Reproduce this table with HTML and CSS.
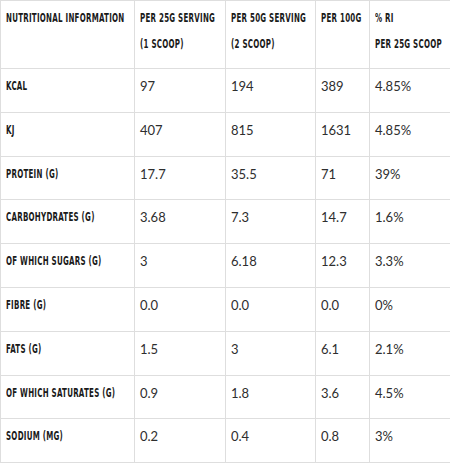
FILE: index.html
```html
<!DOCTYPE html>
<html>
<head>
<meta charset="utf-8">
<link rel="stylesheet" href="styles.css">
</head>
<body>
<table class="nutri">
  <colgroup>
    <col class="c1"><col class="c2"><col class="c3"><col class="c4"><col class="c5">
  </colgroup>
  <tr class="head">
    <th><span class="cn">Nutritional Information</span></th>
    <th><span class="cn">Per 25g Serving</span><br><span class="cn">(1 Scoop)</span></th>
    <th><span class="cn">Per 50g Serving</span><br><span class="cn">(2 Scoop)</span></th>
    <th><span class="cn">Per 100g</span></th>
    <th><span class="cn">% RI</span><br><span class="cn">Per 25g Scoop</span></th>
  </tr>
  <tr><th><span class="cn">Kcal</span></th><td>97</td><td>194</td><td>389</td><td>4.85%</td></tr>
  <tr><th><span class="cn">KJ</span></th><td>407</td><td>815</td><td>1631</td><td>4.85%</td></tr>
  <tr><th><span class="cn">Protein (g)</span></th><td>17.7</td><td>35.5</td><td>71</td><td>39%</td></tr>
  <tr><th><span class="cn">Carbohydrates (g)</span></th><td>3.68</td><td>7.3</td><td>14.7</td><td>1.6%</td></tr>
  <tr><th><span class="cn">Of which sugars (g)</span></th><td>3</td><td>6.18</td><td>12.3</td><td>3.3%</td></tr>
  <tr><th><span class="cn">Fibre (g)</span></th><td>0.0</td><td>0.0</td><td>0.0</td><td>0%</td></tr>
  <tr><th><span class="cn">Fats (g)</span></th><td>1.5</td><td>3</td><td>6.1</td><td>2.1%</td></tr>
  <tr><th><span class="cn">Of which saturates (g)</span></th><td>0.9</td><td>1.8</td><td>3.6</td><td>4.5%</td></tr>
  <tr><th><span class="cn">Sodium (mg)</span></th><td>0.2</td><td>0.4</td><td>0.8</td><td>3%</td></tr>
</table>
</body>
</html>
```
FILE: styles.css
```css
html, body {
  margin: 0;
  padding: 0;
  background: #fff;
  overflow: hidden;
}
.nutri {
  border-collapse: collapse;
  table-layout: fixed;
  width: 450px;
}
.c1 { width: 134px; }
.c2 { width: 91px; }
.c3 { width: 90px; }
.c4 { width: 54px; }
.c5 { width: 81px; }
.nutri th, .nutri td {
  border: 1px solid #dedede;
  vertical-align: top;
  text-align: left;
  padding: 4px 5px 0 5px;
  line-height: 26px;
  box-sizing: border-box;
  overflow: hidden;
}
.nutri tr { height: 43.8px; }
.nutri tr.head { height: 68px; }
.nutri th {
  font-family: "DejaVu Sans Condensed", "DejaVu Sans", sans-serif;
  font-weight: bold;
  font-size: 12.5px;
  text-transform: uppercase;
  color: #1a1a1a;
  letter-spacing: 0.4px;
  white-space: nowrap;
}
.cn {
  display: inline-block;
  transform: scaleX(0.63);
  transform-origin: left center;
}
.nutri td {
  font-family: "Lato", "Open Sans", sans-serif;
  font-size: 13px;
  color: #2e2e2e;
}
```
